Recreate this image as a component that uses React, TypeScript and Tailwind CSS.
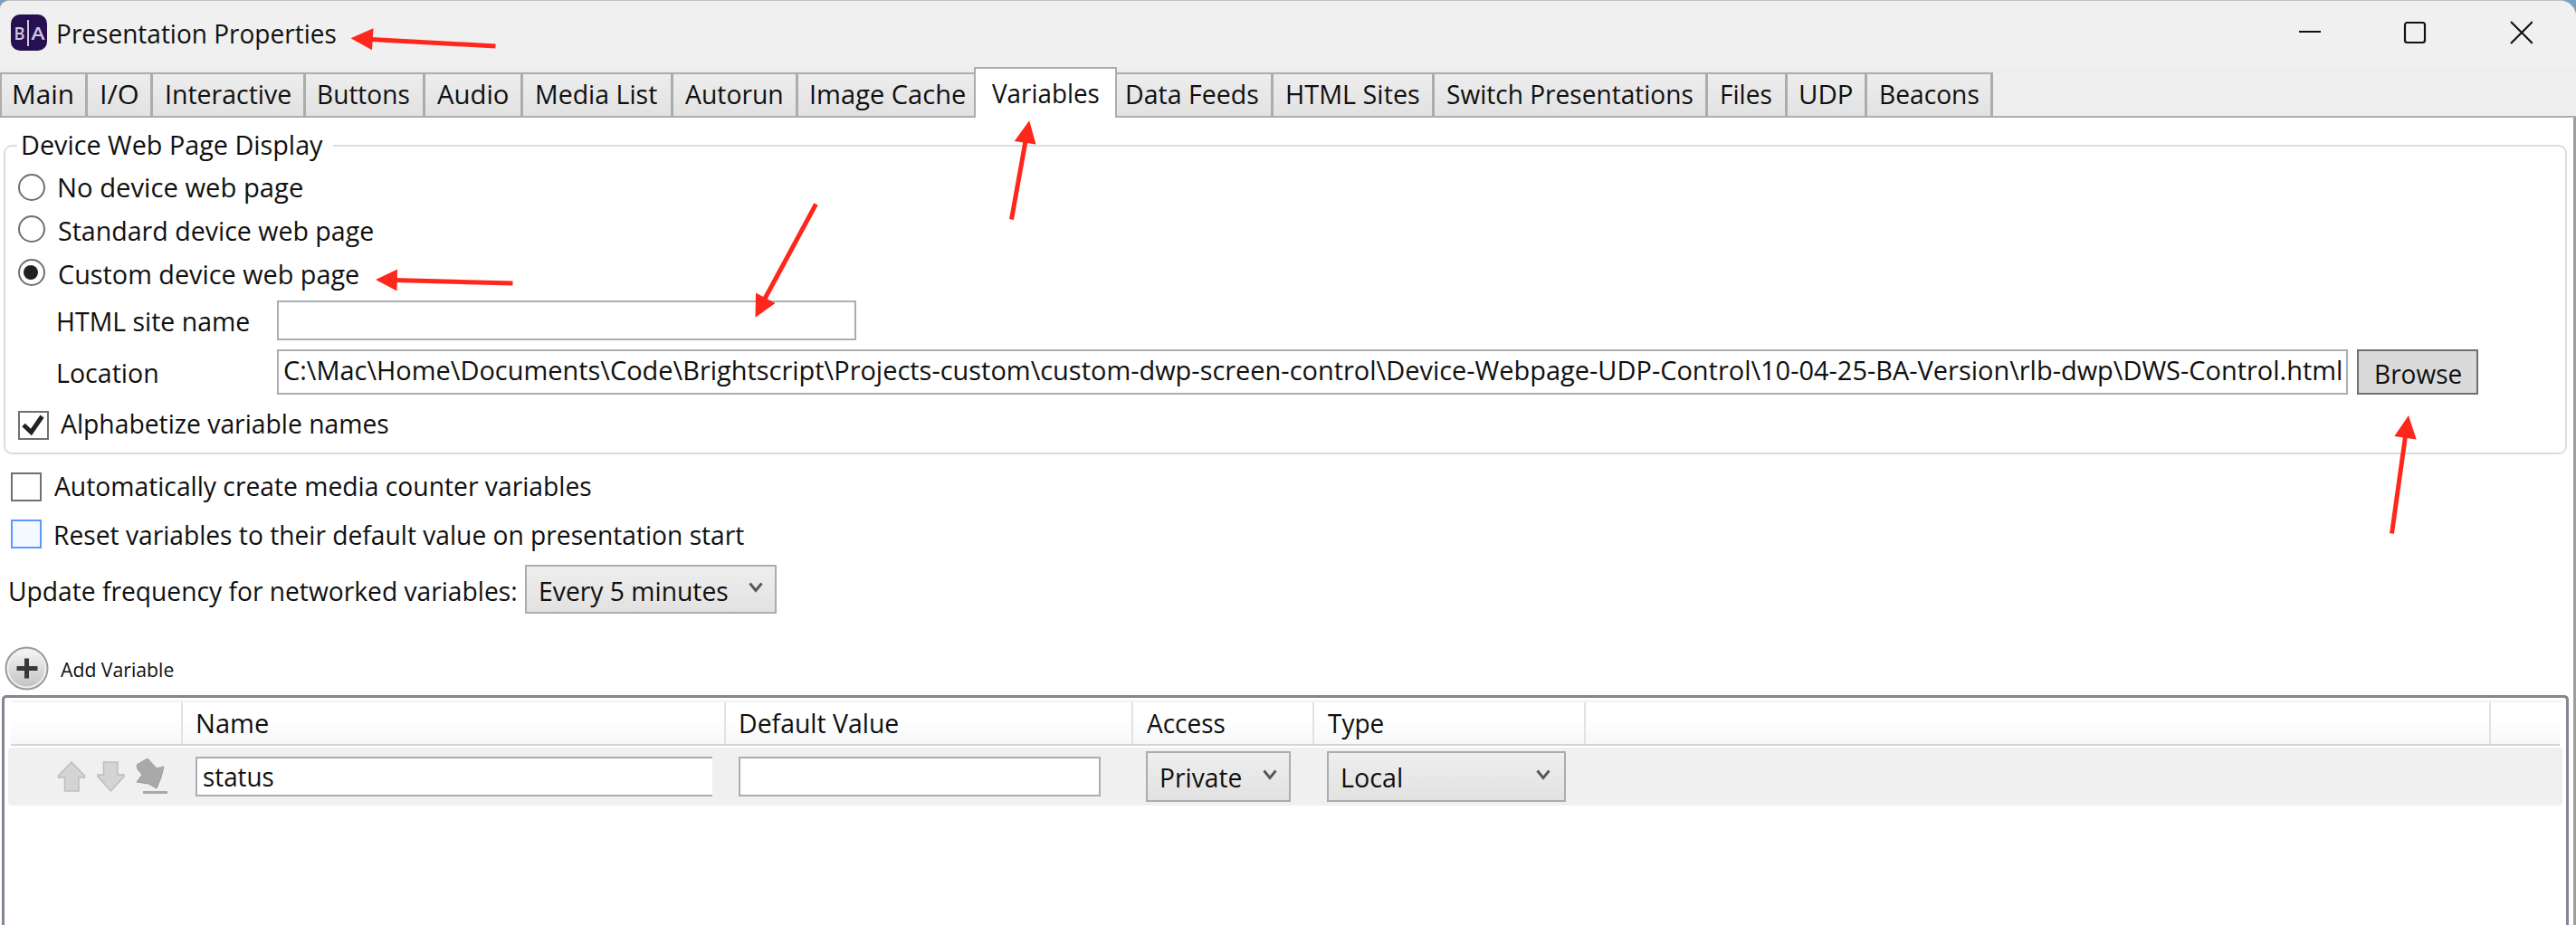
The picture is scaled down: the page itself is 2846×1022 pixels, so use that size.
import { useLayoutEffect, useState } from "react";
import clsx from "clsx";

const FONT = '"Open Sans", "Noto Sans", sans-serif';

/* A single line of text whose ink is fitted to `w` pixels. */
function T({ children, w, size = 29, className }: { children: string; w: number; size?: number; className?: string }) {
  const [fit, setFit] = useState({ s: 1, x: 0 });
  useLayoutEffect(() => {
    const ctx = document.createElement("canvas").getContext("2d");
    if (!ctx) return;
    ctx.font = `${size}px ${FONT}`;
    const m = ctx.measureText(children);
    const s = w / (m.actualBoundingBoxRight + m.actualBoundingBoxLeft);
    setFit({ s, x: m.actualBoundingBoxLeft * s });
  }, [children, w, size]);
  return (
    <span className={clsx("block h-10 shrink-0 leading-10 whitespace-nowrap", className)} style={{ width: w, fontSize: size }}>
      <span className="block w-max origin-left" style={{ transform: `translateX(${fit.x}px) scaleX(${fit.s})` }}>
        {children}
      </span>
    </span>
  );
}

const tabs = [
  { label: "Main", w: 65, box: "w-[97px] pl-[13px]" },
  { label: "I/O", w: 40, box: "w-[72px] pl-[15px]" },
  { label: "Interactive", w: 137, box: "w-[169px] pl-[15px]" },
  { label: "Buttons", w: 100, box: "w-[132px] pl-[14px]" },
  { label: "Audio", w: 78, box: "w-[108px] pl-[13px]" },
  { label: "Media List", w: 133, box: "w-[166px] pl-[15px]" },
  { label: "Autorun", w: 107, box: "w-[138px] pl-[13px]" },
  { label: "Image Cache", w: 170, box: "w-[194px] pl-[14px]", last: true },
  { label: "Variables", w: 118, box: "w-[158px] pl-[18px]", active: true },
  { label: "Data Feeds", w: 145, box: "w-[173px] pl-[11px]" },
  { label: "HTML Sites", w: 146, box: "w-[178px] pl-[15px]" },
  { label: "Switch Presentations", w: 271, box: "w-[302px] pl-[14px]" },
  { label: "Files", w: 55, box: "w-[88px] pl-[15px]" },
  { label: "UDP", w: 57, box: "w-[88px] pl-[14px]" },
  { label: "Beacons", w: 108, box: "w-[139px] pl-[15px]" },
];

function Chevron() {
  return (
    <svg width="16" height="14" viewBox="0 0 16 14" className="shrink-0">
      <path d="M1.5 1.5 8 9.5 14.5 1.5" fill="none" stroke="#565656" strokeWidth="2.8" />
    </svg>
  );
}

function Combo({ label, w, className, gap }: { label: string; w: number; className: string; gap: string }) {
  return (
    <div className={clsx("flex shrink-0 justify-between border-2 border-[#acacac] bg-linear-to-b from-[#eeeeee] to-[#e2e2e2] pl-[15px]", className)}>
      <T w={w} className="mt-[7px]">{label}</T>
      <div className={gap}><Chevron /></div>
    </div>
  );
}

function Radio({ label, w, checked, className, ring }: { label: string; w: number; checked?: boolean; className: string; ring: string }) {
  return (
    <div className={clsx("flex pl-[14px]", className)}>
      <div className={clsx("flex size-[30px] items-center justify-center rounded-full border-2 border-[#707070] bg-white", ring)}>
        {checked && <div className="mr-0.5 size-4 rounded-full bg-[#212121]" />}
      </div>
      <T w={w} className="ml-[15px]">{label}</T>
    </div>
  );
}

function HeadCell({ label, w, className }: { label?: string; w?: number; className: string }) {
  return (
    <div className={clsx("flex h-[46px] shrink-0 border-r-2 border-[#e0e2e4]", className)}>
      {label && w && <T w={w} className="mt-[3px]">{label}</T>}
    </div>
  );
}

function Arrows() {
  return (
    <svg className="pointer-events-none absolute inset-0" width="2846" height="1022" viewBox="0 0 2846 1022" fill="#ff261c" stroke="#ff261c" strokeWidth="5">
      <path d="M410 43.5 547.5 51M436 309.5 566.5 313M1133 156 1117.500 242.5M845 330 901.5 225.5M2657.500 482 2642.500 589.500" />
      <path stroke="none" d="M387.500 42.300 412.500 31.300 411 55.300ZM415 309 439 297.500 438.500 321.500ZM1137.200 133.300 1144.500 159.500 1120.700 156ZM834.500 350.700 835 323.500 856.500 335ZM2661 459 2669.700 485.500 2645.300 482Z" />
    </svg>
  );
}

export default function App() {
  return (
    <div className="relative h-[1022px] w-[2846px] overflow-hidden bg-[#7a9fc0] font-['Open_Sans','Noto_Sans',sans-serif] text-[#101010]">
      <div className="flex h-full flex-col overflow-hidden rounded-tl-[10px] rounded-tr-[18px] border-t border-[#c0c0c0] bg-[#efefef]">
        <header className="flex h-[73px] shrink-0 bg-[#f0f0f0] pl-3">
          <div className="mt-[15px] flex size-10 shrink-0 rounded-[10px] bg-[#27104f]">
            <svg width="40" height="40" viewBox="0 0 40 40" fill="#cfc6e0" fontFamily="Open Sans, sans-serif" fontWeight="600" fontSize="20">
              <text x="3.500" y="27.500" textLength="12" lengthAdjust="spacingAndGlyphs">B</text>
              <text x="22.500" y="27.500" textLength="15" lengthAdjust="spacingAndGlyphs">A</text>
              <path d="M18 6h2v29h-2z" />
            </svg>
          </div>
          <T w={307} className="mt-[16px] ml-[12px]">Presentation Properties</T>
          <div className="ml-auto flex pt-[22px] pr-12">
            <svg width="260" height="26" viewBox="0 0 260 26" fill="none" stroke="#111" strokeWidth="2.2">
              <path d="M2 12H26" />
              <rect x="119" y="2" width="22" height="22" rx="2.500" />
              <path d="M236 1 260 25M260 1 236 25" />
            </svg>
          </div>
        </header>
        <nav className="flex h-[56px] shrink-0 items-end border-b-2 border-[#acacac] bg-[#eeeeee]">
          {tabs.map((t) => (
            <div
              key={t.label}
              className={clsx(
                "shrink-0 border-[#acacac]",
                t.box,
                t.active
                  ? "relative -mb-[2px] h-[56px] border-x-2 border-t-2 bg-white pt-[7px]"
                  : "h-[48px] border-t-2 bg-linear-to-b from-[#ededed] to-[#e2e2e2] pt-[2px] first:border-l-2",
                !t.active && !t.last && "border-r-[3px]",
              )}
            >
              <T w={t.w}>{t.label}</T>
            </div>
          ))}
        </nav>
        <main className="flex min-h-0 flex-1 flex-col border-r-[3px] border-[#9e9e9e] bg-white">
          <fieldset className="mt-[30px] ml-1 flex h-[342px] w-[2832px] shrink-0 flex-col rounded-[9px] border-2 border-[#d5dfe5]">
            <div className="-mt-[22px] ml-[13px] w-[349px] bg-white pl-[6px]">
              <T w={332}>Device Web Page Display</T>
            </div>
            <Radio label="No device web page" w={269} className="mt-[7px]" ring="mt-[5px]" />
            <Radio label="Standard device web page" w={347} className="mt-[8px]" ring="mt-[3px]" />
            <Radio label="Custom device web page" w={331} checked className="mt-[8px]" ring="mt-[3px]" />
            <div className="mt-[9px] flex h-11 pl-[58px]">
              <T w={211} className="mt-[3px]">HTML site name</T>
              <div className="ml-[31px] h-11 w-[640px] border-2 border-[#abadb3]" />
            </div>
            <div className="mt-[10px] flex h-[50px] pl-[58px]">
              <T w={110} className="mt-[6px]">Location</T>
              <div className="ml-[132px] h-[50px] w-[2288px] border-2 border-[#abadb3] pt-[1px] pl-[6px]">
                <T w={2272}>{"C:\\Mac\\Home\\Documents\\Code\\Brightscript\\Projects-custom\\custom-dwp-screen-control\\Device-Webpage-UDP-Control\\10-04-25-BA-Version\\rlb-dwp\\DWS-Control.html"}</T>
              </div>
              <div className="ml-[10px] h-[50px] w-[134px] border-2 border-[#707070] bg-[#dadada] pt-[5px] pl-[19px]">
                <T w={94}>Browse</T>
              </div>
            </div>
            <div className="mt-[12px] flex pl-[14px]">
              <div className="mt-[6px] h-8 w-[34px] border-2 border-[#707070] bg-white">
                <svg width="30" height="28" viewBox="0 0 30 28"><path d="M4 13.500 12.500 21.500 24.500 4" fill="none" stroke="#212121" strokeWidth="5" /></svg>
              </div>
              <T w={362} className="ml-[13px]">Alphabetize variable names</T>
            </div>
          </fieldset>
          <div className="mt-[15px] flex pl-3">
            <div className="mt-[5px] h-8 w-[34px] border-2 border-[#707070]" />
            <T w={593} className="ml-[14px]">Automatically create media counter variables</T>
          </div>
          <div className="mt-[14px] flex pl-3">
            <div className="mt-[3px] h-8 w-[34px] border-2 border-[#5e97ff] bg-[#f3f9ff]" />
            <T w={761} className="ml-[15px]">Reset variables to their default value on presentation start</T>
          </div>
          <div className="mt-[13px] flex h-[54px] shrink-0 pl-[11px]">
            <T w={559} className="mt-[9px]">Update frequency for networked variables:</T>
            <Combo label="Every 5 minutes" w={207} className="ml-[10px] h-[54px] w-[278px]" gap="pt-[17px] pr-[13px]" />
          </div>
          <div className="mt-[36px] flex h-[49px] shrink-0 pl-[5px]">
            <svg width="49" height="49" viewBox="0 0 49 49">
              <defs>
                <linearGradient id="add" x1="0" y1="0" x2="0" y2="1"><stop offset="0" stopColor="#f4f4f4" /><stop offset="1" stopColor="#c4c4c4" /></linearGradient>
              </defs>
              <circle cx="24.500" cy="24.500" r="23" fill="#f0f0f0" stroke="#9a9a9a" strokeWidth="2" />
              <circle cx="24.500" cy="24.500" r="20" fill="url(#add)" />
              <path d="M13.500 24.500h23M24.500 13.500v22" stroke="#383838" strokeWidth="5" />
            </svg>
            <T w={125} size={22} className="mt-[5px] ml-[13px]">Add Variable</T>
          </div>
          <section className="mt-[5px] ml-[2px] min-h-0 w-[2836px] flex-1 rounded-t-[5px] border-x-[3px] border-t-[3px] border-[#828790] pt-[3px]">
            <div className="mr-[7px] ml-[7px] flex h-[50px] border-t-2 border-b-2 border-t-[#f2f2f2] border-b-[#d5d5d5] bg-linear-to-b from-white from-40% to-[#f5f7f9]">
              <HeadCell className="w-[190px]" />
              <HeadCell label="Name" w={78} className="w-[600px] pl-[16px]" />
              <HeadCell label="Default Value" w={174} className="w-[450px] pl-[16px]" />
              <HeadCell label="Access" w={86} className="w-[200px] pl-[15px]" />
              <HeadCell label="Type" w={61} className="w-[300px] pl-[15px]" />
              <HeadCell className="w-[1000px]" />
            </div>
            <div className="mt-[2px] ml-1 flex h-[64px] w-[2822px] rounded-[4px] bg-[#f0f0f0]">
              <svg width="130" height="44" viewBox="0 0 130 44" className="mt-[9px] ml-[54px]" fill="#d4d4d4" stroke="#bdbdbd" strokeWidth="1.500">
                <path d="M16 7 30.500 22V24H24V39H8.500V24H1.500V22Z" />
                <path d="M51.500 7H67V21H74V23L59.500 39 45 23V21H51.500Z" />
                <g fill="#a9a9a9" stroke="#9c9c9c" strokeWidth="1">
                  <path d="M88 10 100 3 110 14 118 12 115 24 110 36 101 31 88 29 94 21 89 15Z" />
                  <path d="M95 40.500H122" stroke="#a8a8a8" strokeWidth="3" />
                </g>
              </svg>
              <div className="mt-[10px] ml-[23px] h-11 w-[571px] border-y-2 border-l-2 border-[#abadb3] bg-white pl-[7px]">
                <T w={77}>status</T>
              </div>
              <div className="mt-[10px] ml-[29px] h-11 w-[400px] border-2 border-[#abadb3] bg-white" />
              <Combo label="Private" w={88} className="mt-1 ml-[50px] h-14 w-[160px]" gap="pt-[18px] pr-[13px]" />
              <Combo label="Local" w={65} className="mt-1 ml-[40px] h-14 w-[264px]" gap="pt-[18px] pr-[15px]" />
            </div>
          </section>
        </main>
      </div>
      <Arrows />
    </div>
  );
}
